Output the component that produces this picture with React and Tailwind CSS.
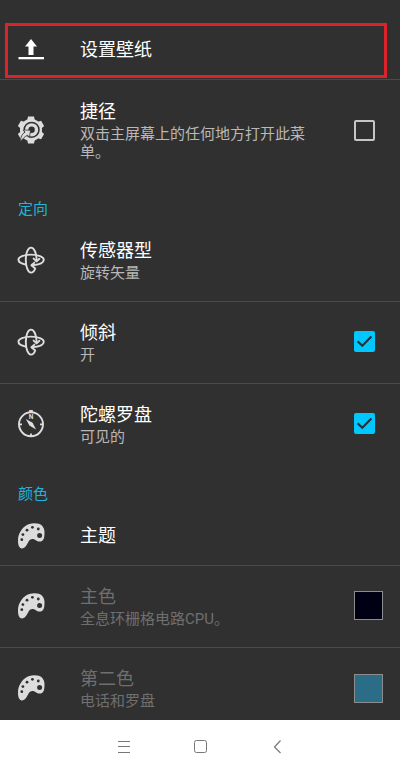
import React, { useState } from "react";

function Glyph({ children }) {
  return (
    <svg viewBox="0 0 28 28" className="h-7 w-7 shrink-0" fill="none" aria-hidden="true">
      {children}
    </svg>
  );
}

function UploadIcon() {
  return (
    <Glyph>
      <path d="M14 3 L20 10.5 H16.5 V19 H11.5 V10.5 H8 Z" fill="#fff" />
      <rect x="1.5" y="21" width="25.5" height="2.3" fill="#fff" />
    </Glyph>
  );
}

function GearIcon() {
  return (
    <Glyph>
      <g fill="#dcdcdc">
        <circle cx="14" cy="14" r="11" />
        {[0, 60, 120, 180, 240, 300].map((a) => (
          <path key={a} d="M10 5 L11 0.6 H17 L18 5 Z" transform={`rotate(${a} 14 14)`} />
        ))}
      </g>
      <circle cx="14.6" cy="13.8" r="7.4" stroke="#303030" strokeWidth="1.5" />
      <circle cx="14.6" cy="13.8" r="3.2" fill="#303030" />
      <path
        d="M3.6 26 C3.4 20.8 5 18 8 16.2 L6.4 14 L13.6 14.2 L12.4 21.4 L10.6 19.2 C7.6 20.6 5.6 22.6 3.6 26 Z"
        fill="#dcdcdc"
        stroke="#303030"
        strokeWidth="0.8"
      />
    </Glyph>
  );
}

function OrbitIcon() {
  return (
    <Glyph>
      <g stroke="#dedede" strokeWidth="1.9" strokeLinecap="round" strokeLinejoin="round">
        <path d="M18.2 22.5 C17.2 25.5 15.6 26.6 14 26.6 C11 26.6 8.8 21 8.8 14 C8.8 7 11 1.6 14 1.6 C17 1.6 19.6 7 19.6 14.5" />
        <path d="M16.6 12.6 L19.6 15.4 L22.4 12.8" />
        <path d="M8.8 18.6 C4.4 17.8 1.4 16 1.4 13.6 C1.4 10.8 7 8.6 14 8.6 C21 8.6 26.8 10.8 26.8 13.8 C26.8 16.6 22.5 18.8 14.8 19.2" />
        <path d="M17.4 16.6 L14.4 19.2 L17.4 21.8" />
      </g>
    </Glyph>
  );
}

function CompassIcon() {
  return (
    <Glyph>
      <circle cx="14" cy="14.3" r="12" stroke="#dedede" strokeWidth="1.9" />
      <rect x="12.2" y="0" width="3.6" height="2.8" fill="#dedede" />
      <path d="M2 14.3 H5 M23 14.3 H26 M14 23.4 V26" stroke="#dedede" strokeWidth="1.8" />
      <path d="M8.8 9 L15.6 12.8 L19 19.4 L12.4 15.6 Z" fill="#dedede" />
      <text x="14" y="9" textAnchor="middle" fontSize="6.5" fontWeight="700" fontFamily="Roboto, sans-serif" fill="#dedede">
        N
      </text>
    </Glyph>
  );
}

function PaletteIcon() {
  return (
    <Glyph>
      <path
        d="M4.9 26.5 C2.2 26.3 1 23 1 19 C1 15 1.6 12.6 3.2 10 C5.6 5.6 10 1.2 17.5 1.2 C24 1.2 27.5 4.6 27.5 10 C27.5 15.4 27 19.6 22.6 19.6 C19.4 19.6 18.4 17 15.4 17 C12.4 17 11.4 20 10 22.6 C8.6 25 7.2 26.6 4.9 26.5 Z"
        fill="#dcdcdc"
      />
      <g fill="#303030">
        <circle cx="4.8" cy="17.7" r="1.4" />
        <circle cx="5.9" cy="12.6" r="1.4" />
        <circle cx="10" cy="8.2" r="1.4" />
        <circle cx="15.4" cy="5.3" r="1.4" />
        <circle cx="21.3" cy="7" r="1.4" />
        <circle cx="22.6" cy="13.6" r="2.5" />
      </g>
    </Glyph>
  );
}

function RowText({ title, summary, disabled }) {
  return (
    <span className="ml-[35px] flex min-w-0 flex-1 flex-col">
      <span className={`text-[18px] leading-[26px] ${disabled ? "text-[#6f6f6f]" : "text-white"}`}>{title}</span>
      {summary && (
        <span className={`text-[15px] leading-[18px] ${disabled ? "text-[#6f6f6f]" : "text-[#b8b8b8]"}`}>{summary}</span>
      )}
    </span>
  );
}

const ROW = "relative flex w-full shrink-0 items-center pl-[17px] text-left";
const LINE = "border-b border-[#4a4a4a]";

function ActionRow({ icon, title, summary, line, disabled, swatch, children }) {
  return (
    <button
      type="button"
      disabled={disabled}
      className={`${ROW} ${line ? LINE : ""} ${summary ? "h-[82px] pb-0.5" : "h-[61px] pt-0.5"} pr-[17px]`}
    >
      {icon}
      <RowText title={title} summary={summary} disabled={disabled} />
      {swatch && <span className={`h-[29px] w-[29px] shrink-0 border border-[#8c8c8c] ${swatch}`} />}
      {children}
    </button>
  );
}

function CheckRow({ icon, title, summary, line, tall, defaultChecked }) {
  const [checked, setChecked] = useState(defaultChecked);
  return (
    <label
      className={`${ROW} ${line ? LINE : ""} ${tall ? "h-[100px]" : line ? "h-[82px] pb-0.5" : "h-[81px] pb-0.5"} pr-[25px]`}
    >
      {icon}
      <RowText title={title} summary={summary} />
      <span className="ml-[38px] grid shrink-0 place-items-center">
        <input
          type="checkbox"
          checked={checked}
          onChange={(e) => setChecked(e.target.checked)}
          className="col-start-1 row-start-1 h-[21px] w-[21px] appearance-none rounded-[2px] border-2 border-[#c6c6c6] checked:border-[#00c8ff] checked:bg-[#00c8ff]"
        />
        {checked && (
          <svg viewBox="0 0 21 21" className="pointer-events-none col-start-1 row-start-1 h-[21px] w-[21px]" fill="none" aria-hidden="true">
            <path d="M3.6 10.2 L8.3 14.8 L17.4 5.4" stroke="#22343a" strokeWidth="2.2" />
          </svg>
        )}
      </span>
    </label>
  );
}

function SectionHeader({ children }) {
  return <h2 className="h-10 shrink-0 pt-[19px] pl-[18px] text-[15px] leading-5 text-[#1fb4dc]">{children}</h2>;
}

export default function App() {
  return (
    <div lang="zh-CN" className="flex h-screen w-full flex-col bg-white font-['Roboto','Noto_Sans_CJK_SC',sans-serif]">
      <main className="flex min-h-0 flex-1 flex-col overflow-y-auto bg-[#303030] pt-[19px] [scrollbar-width:none]">
        <ActionRow icon={<UploadIcon />} title="设置壁纸" line>
          <span className="pointer-events-none absolute top-1 right-[13px] left-[5px] h-[55px] border-3 border-[#dc222a]" />
        </ActionRow>
        <CheckRow icon={<GearIcon />} title="捷径" summary="双击主屏幕上的任何地方打开此菜单。" tall defaultChecked={false} />

        <SectionHeader>定向</SectionHeader>
        <ActionRow icon={<OrbitIcon />} title="传感器型" summary="旋转矢量" line />
        <CheckRow icon={<OrbitIcon />} title="倾斜" summary="开" line defaultChecked />
        <CheckRow icon={<CompassIcon />} title="陀螺罗盘" summary="可见的" defaultChecked />

        <SectionHeader>颜色</SectionHeader>
        <ActionRow icon={<PaletteIcon />} title="主题" line />
        <ActionRow icon={<PaletteIcon />} title="主色" summary="全息环栅格电路CPU。" line disabled swatch="bg-[#000015]" />
        <ActionRow icon={<PaletteIcon />} title="第二色" summary="电话和罗盘" disabled swatch="bg-[#2b6d87]" />
      </main>

      <nav className="flex h-[53px] shrink-0 items-center justify-center gap-[53px] text-[#777]">
        <button type="button" aria-label="菜单">
          <svg viewBox="0 0 24 24" className="h-6 w-6" fill="none" stroke="currentColor" aria-hidden="true">
            <path d="M7 6.5 H19 M7 11.5 H19 M7 17.5 H19" />
          </svg>
        </button>
        <button type="button" aria-label="主屏幕">
          <svg viewBox="0 0 24 24" className="h-6 w-6" fill="none" stroke="currentColor" aria-hidden="true">
            <rect x="6.5" y="5.5" width="12" height="12" rx="2" />
          </svg>
        </button>
        <button type="button" aria-label="返回">
          <svg viewBox="0 0 24 24" className="h-6 w-6" fill="none" stroke="currentColor" strokeWidth="1.2" aria-hidden="true">
            <path d="M15.5 5.5 L9.5 12 L15.5 18" />
          </svg>
        </button>
      </nav>
    </div>
  );
}
